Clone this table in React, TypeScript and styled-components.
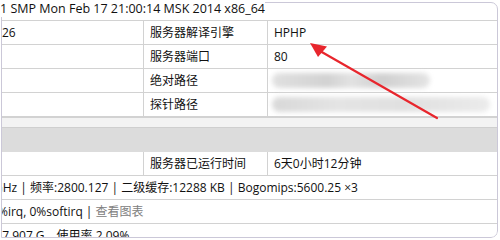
import React from "react";
import styled, { createGlobalStyle } from "styled-components";

const GlobalStyle = createGlobalStyle`
  html, body { margin: 0; padding: 0; background: #fff; }
  body {
    font-family: "Open Sans", "Noto Sans CJK SC", sans-serif;
    font-size: 12px;
    color: #111;
  }
`;

const Frame = styled.div`
  position: relative;
  width: 497px;
  height: 238px;
  margin-left: 1px;
  padding: 0 1px;
  box-sizing: border-box;
  overflow: hidden;
  border-bottom-right-radius: 7px;
  &::after {
    content: "";
    position: absolute;
    top: 2px;
    left: 0;
    right: 0;
    bottom: 0;
    border: 1px solid #cbc8d8;
    border-radius: 0 7px 7px 0;
    pointer-events: none;
  }
`;

const Row = styled.div<{ $cols?: boolean; $first?: boolean; $thick?: boolean }>`
  display: grid;
  grid-template-columns: ${(p) => (p.$cols ? "141px 124px 1fr" : "1fr")};
  height: ${(p) => (p.$thick ? 25 : 24)}px;
  margin-top: ${(p) => (p.$first ? -3 : 0)}px;
  box-sizing: border-box;
  border-bottom: ${(p) => (p.$thick ? 2 : 1)}px solid #d2d2d2;
  line-height: 23px;
  white-space: nowrap;
`;

const Cell = styled.div<{ $divider?: boolean; $pad?: number }>`
  padding-left: ${(p) => (p.$pad ?? 6)}px;
  border-left: ${(p) => (p.$divider ? "1px solid #d2d2d2" : "none")};
  min-width: 0;
`;

const Spacer = styled.div`
  height: 10px;
  box-sizing: border-box;
  background: #f3f3f3;
  border-bottom: 1px solid #cfcfcf;
`;

const Band = styled.div`
  height: 24px;
  background: #dcdcdc;
`;

const Clip = styled.span<{ $shift: number }>`
  display: inline-block;
  margin-left: ${(p) => p.$shift}px;
`;

const TopText = styled.span`
  position: relative;
  z-index: 1;
  background: #fff;
  margin-left: -2px;
  font-size: 12.5px;
`;

const Link = styled.span`
  color: #808080;
`;

const Smudge = styled.div<{ $w: number; $light?: boolean }>`
  margin-top: 4px;
  width: ${(p) => p.$w}px;
  height: 15px;
  border-radius: 8px;
  background: ${(p) =>
    p.$light
      ? "linear-gradient(90deg, #d8d8d8 0%, #e4e4e4 30%, #e0e0e0 60%, #ebebeb 100%)"
      : "linear-gradient(90deg, #e0e0e0 0%, #d2d2d2 35%, #e2e2e2 50%, #d0d0d0 70%, #e4e4e4 100%)"};
  filter: blur(2.5px);
`;

const Arrow = styled.svg`
  position: absolute;
  left: -1px;
  top: 0;
  z-index: 2;
  pointer-events: none;
`;

export default function App() {
  return (
    <>
      <GlobalStyle />
      <Frame>
        <Row $first>
          <Cell $pad={0}>
            <TopText>1 SMP Mon Feb 17 21:00:14 MSK 2014 x86_64</TopText>
          </Cell>
        </Row>
        <Row $cols>
          <Cell $pad={0}>26</Cell>
          <Cell $divider>服务器解译引擎</Cell>
          <Cell $divider>HPHP</Cell>
        </Row>
        <Row $cols>
          <Cell $pad={0}></Cell>
          <Cell $divider>服务器端口</Cell>
          <Cell $divider>80</Cell>
        </Row>
        <Row $cols>
          <Cell $pad={0}></Cell>
          <Cell $divider>绝对路径</Cell>
          <Cell $divider $pad={4}>
            <Smudge $w={158} />
          </Cell>
        </Row>
        <Row $cols $thick>
          <Cell $pad={0}></Cell>
          <Cell $divider>探针路径</Cell>
          <Cell $divider $pad={4}>
            <Smudge $w={218} $light />
          </Cell>
        </Row>
        <Spacer />
        <Band />
        <Row $cols>
          <Cell $pad={0}></Cell>
          <Cell $divider>服务器已运行时间</Cell>
          <Cell $divider>6天0小时12分钟</Cell>
        </Row>
        <Row>
          <Cell $pad={0}>
            <Clip $shift={-8}>GHz | 频率:2800.127 | 二级缓存:12288 KB | Bogomips:5600.25 ×3</Clip>
          </Cell>
        </Row>
        <Row>
          <Cell $pad={0}>
            <Clip $shift={-4}>%irq, 0%softirq | <Link>查看图表</Link></Clip>
          </Cell>
        </Row>
        <Row>
          <Cell $pad={0}>
            <Clip $shift={-3}>:7.907 G，使用率 2.09%</Clip>
          </Cell>
        </Row>
        <Arrow width="500" height="240" viewBox="0 0 500 240">
          <line x1="437" y1="118" x2="320" y2="51" stroke="#e8262d" strokeWidth="2.2" strokeLinecap="round" />
          <polygon points="310,43 327,46.5 318,57" fill="#e8262d" />
        </Arrow>
      </Frame>
    </>
  );
}
